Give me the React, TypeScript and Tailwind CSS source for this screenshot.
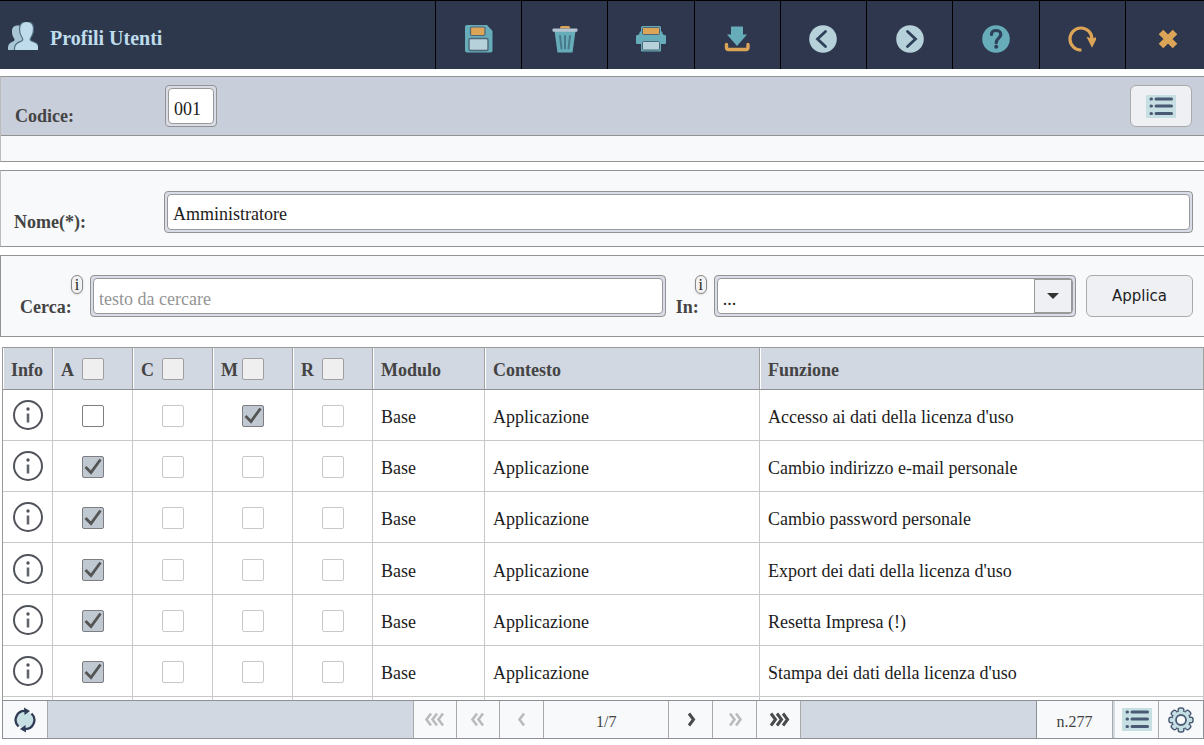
import type { ReactNode } from "react";
import { clsx } from "clsx";

const serif = "font-['Liberation_Serif',serif]";

const teal = "#67adb9";
const orange = "#dca456";
const pale = "#b6d1d9";
const navy = "#2f374e";

function UsersIcon() {
  return (
    <svg width="30" height="28" viewBox="0 0 30 28">
      <path
        d="M0 28V25.500C0.500 21 3 20.500 6 19C7 18 6.500 17 5.500 15.500C4 13 4 11 4 9C4 5 6.500 3.500 10 3.500H15V28z"
        fill="#a8c6d6"
      />
      <path
        d="M6.500 29V26C7 21.500 10 20.500 14 18.800C15.500 18 14.500 16 13.500 14.500C12 12.500 11.500 9.500 11.500 7C11.500 2.500 14 -0.500 18.500 -0.500S25.500 2.500 25.500 7C25.500 9.500 25 12.500 23.500 14.500C22.500 16 21.500 18 23 18.800C27 20.500 30.500 21 31 26V29z"
        fill="#bedcec"
        stroke="#4f6c80"
        strokeWidth="1.200"
      />
    </svg>
  );
}

function SaveIcon() {
  return (
    <svg width="28" height="28" viewBox="0 0 28 28">
      <path d="M2 0h20l5.500 6v19.500a2 2 0 0 1-2 2H2a2 2 0 0 1-2-2V2a2 2 0 0 1 2-2z" fill={teal} />
      <rect x="5.500" y="2" width="14.500" height="8.500" rx="1.500" fill={orange} stroke="#4b6678" strokeWidth="1.200" />
      <rect x="4" y="13.500" width="19" height="12" rx="1.500" fill={pale} stroke="#4b6678" strokeWidth="1.400" />
    </svg>
  );
}

function TrashIcon() {
  return (
    <svg width="26" height="28" viewBox="0 0 26 28">
      <path d="M8 3.500V2.500Q8 1 9.500 1h7Q18 1 18 2.500v1z" fill={orange} />
      <path d="M2.500 6h21L20.500 27.500h-15z" fill={teal} />
      <rect x="0.500" y="3.500" width="25" height="3.200" rx="1" fill="#b4c3d2" />
      <path d="M8 11l1.500 12.500M13 11v12.500M18 11l-1.500 12.500" stroke="#47798a" strokeWidth="2" fill="none" strokeLinecap="round" />
    </svg>
  );
}

function PrintIcon() {
  return (
    <svg width="30" height="26" viewBox="0 0 30 26">
      <rect x="5" y="0" width="20" height="10" rx="1.500" fill={teal} />
      <path d="M4 5.500h22l1 3 3 1v7.500q0 1-1 1H1q-1 0-1-1V9.500l3-1z" fill={teal} />
      <rect x="5" y="14" width="20" height="11.500" rx="1" fill={teal} />
      <rect x="6.500" y="1.500" width="17" height="7" rx="1" fill={orange} stroke="#4b6678" strokeWidth="1" />
      <rect x="6.500" y="15.500" width="17" height="8.500" rx="1" fill={pale} stroke="#4b6678" strokeWidth="1" />
    </svg>
  );
}

function DownloadIcon() {
  return (
    <svg width="26" height="26" viewBox="0 0 26 26">
      <path d="M8.500 0.500h10q.5 0 .5.500v7.500h4L13 20 3 8.500h4V1q0-.5.500-.5z" fill={teal} />
      <path d="M2.500 18.500v3q0 2 2 2h17.500q2 0 2-2v-3" fill="none" stroke={orange} strokeWidth="3.400" strokeLinecap="round" />
    </svg>
  );
}

function ArrowIcon({ right = false }: { right?: boolean }) {
  return (
    <svg width="28" height="28" viewBox="0 0 28 28">
      <circle cx="14" cy="14" r="13.800" fill={pale} />
      <path
        d={right ? "M11.500 6.500l8 7.500-8 7.500" : "M16.500 6.500l-8 7.500 8 7.500"}
        fill="none"
        stroke="#2f405a"
        strokeWidth="2.800"
        strokeLinecap="round"
      />
    </svg>
  );
}

function HelpIcon() {
  return (
    <svg width="28" height="28" viewBox="0 0 28 28">
      <circle cx="14" cy="14" r="13.800" fill={teal} />
      <path
        d="M9.500 9.500C9.500 6.500 11.500 5.500 14 5.500s4.800 1.500 4.800 4c0 3.500-4.600 3.800-4.600 8.200"
        fill="none"
        stroke="#2f405a"
        strokeWidth="3.200"
        strokeLinecap="round"
      />
      <circle cx="14.200" cy="21.800" r="2" fill="#2f405a" />
    </svg>
  );
}

function UndoIcon() {
  return (
    <svg width="28" height="28" viewBox="0 0 28 28">
      <path d="M13.500 25A11 11 0 1 1 24 14" fill="none" stroke={orange} strokeWidth="3.200" />
      <path d="M20 13l4 1.500 4-1.500-4 8z" fill={orange} stroke={orange} strokeWidth="1.500" />
    </svg>
  );
}

function CloseIcon() {
  return (
    <svg width="20" height="20" viewBox="0 0 20 20">
      <path d="M3 3l14 14M17 3L3 17" stroke={orange} strokeWidth="6.500" />
    </svg>
  );
}

function ListIcon() {
  return (
    <svg width="30" height="23" viewBox="0 0 30 23">
      <rect width="30" height="23" fill="#c5dfe3" />
      {[4, 11, 18.500].map((y) => (
        <path key={y} d={`M5 ${y}h.5M10 ${y}h15.500`} stroke="#4a5a74" strokeWidth="3" strokeLinecap="round" />
      ))}
    </svg>
  );
}

function InfoIcon() {
  return (
    <svg width="30" height="30" viewBox="0 0 30 30" className="block">
      <circle cx="15" cy="15" r="14" fill="none" stroke="#50535a" strokeWidth="2" />
      <circle cx="15" cy="9" r="1.700" fill="#50535a" />
      <path d="M15 13.500v9" stroke="#62656b" strokeWidth="2.600" />
    </svg>
  );
}

function RefreshIcon() {
  return (
    <svg width="22" height="26" viewBox="0 0 22 26">
      <circle cx="11" cy="13" r="8.500" fill="#c5dfe3" />
      <path d="M4.500 19.500A9 9 0 0 1 11.500 4M17.500 6.500A9 9 0 0 1 10.500 22" fill="none" stroke="#2f3b55" strokeWidth="2.300" />
      <path d="M10 0.500l6 3.500-5.500 4zM12 25.500l-6-3.500 5.500-4z" fill="#2f3b55" />
    </svg>
  );
}

function GearIcon() {
  const lobes = [0, 45, 90, 135, 180, 225, 270, 315];
  return (
    <svg width="26" height="26" viewBox="-13 -13 26 26">
      {lobes.map((a) => (
        <rect key={a} x="-2.800" y="-12" width="5.600" height="8" rx="2" transform={`rotate(${a})`} fill="#c5dfe3" stroke="#4d5c76" strokeWidth="1.500" />
      ))}
      <circle r="9" fill="#c5dfe3" stroke="#4d5c76" strokeWidth="1" />
      {lobes.map((a) => (
        <rect key={a} x="-2.100" y="-11" width="4.200" height="8" rx="1.500" transform={`rotate(${a})`} fill="#c5dfe3" />
      ))}
      <circle r="5" fill="#f8f9fb" stroke="#4d5c76" strokeWidth="1.800" />
    </svg>
  );
}

function Chevrons({ count, right = false, active = false }: { count: number; right?: boolean; active?: boolean }) {
  const width = count * 6 + 4;
  return (
    <svg width={width} height="16" viewBox={`0 0 ${width} 16`} className={clsx(right && "-scale-x-100")}>
      {Array.from({ length: count }, (_, i) => (
        <path
          key={i}
          d={`M${i * 6 + 7} 1.500l-4.500 6 4.500 6`}
          fill="none"
          stroke={active ? "#4a4a4a" : "#b9bbbd"}
          strokeWidth={active ? 3 : 2.6}
        />
      ))}
    </svg>
  );
}

const tools = [
  { name: "Salva", icon: <SaveIcon /> },
  { name: "Elimina", icon: <TrashIcon /> },
  { name: "Stampa", icon: <PrintIcon /> },
  { name: "Scarica", icon: <DownloadIcon /> },
  { name: "Precedente", icon: <ArrowIcon /> },
  { name: "Successivo", icon: <ArrowIcon right /> },
  { name: "Aiuto", icon: <HelpIcon /> },
  { name: "Annulla", icon: <UndoIcon /> },
  { name: "Chiudi", icon: <CloseIcon /> },
];

const flags = ["A", "C", "M", "R"];

// "on" and "off" can be changed by the user, "-" is locked
const rows = [
  { funzione: "Accesso ai dati della licenza d'uso", state: ["off", "-", "on", "-"] },
  { funzione: "Cambio indirizzo e-mail personale", state: ["on", "-", "-", "-"] },
  { funzione: "Cambio password personale", state: ["on", "-", "-", "-"] },
  { funzione: "Export dei dati della licenza d'uso", state: ["on", "-", "-", "-"] },
  { funzione: "Resetta Impresa (!)", state: ["on", "-", "-", "-"] },
  { funzione: "Stampa dei dati della licenza d'uso", state: ["on", "-", "-", "-"] },
];

function Frame({ className, children }: { className?: string; children: ReactNode }) {
  return (
    <div className={clsx("h-[42px] rounded border border-[#939393] bg-[#d8dce7] p-[2px]", className)}>
      {children}
    </div>
  );
}

const field =
  "block h-full w-full rounded border border-[#999] bg-white px-[5px] pt-[6px] text-lg leading-6 text-[#1c1c1c] outline-none";

function Hint() {
  return (
    <button
      type="button"
      aria-label="Informazioni"
      className="flex h-[19px] w-3 shrink-0 items-center justify-center self-start rounded-md border border-[#888] bg-[#f2f2f2] text-base leading-4 text-[#222] shadow"
    >
      i
    </button>
  );
}

function Check({ label, state }: { label: string; state: string }) {
  return (
    <span className="relative block size-[22px]">
      <input
        type="checkbox"
        aria-label={label}
        defaultChecked={state === "on"}
        disabled={state === "-"}
        className="peer block size-[22px] appearance-none rounded-xs border border-[#7d7d82] bg-white checked:bg-[#c0c9d1] disabled:border-[#c8c8c8]"
      />
      <svg viewBox="0 0 22 22" className="pointer-events-none absolute inset-0 hidden peer-checked:block">
        <path d="M3.500 11l5.500 5.500L18.500 3.500" fill="none" stroke="#555" strokeWidth="2.800" />
      </svg>
    </span>
  );
}

const th = "border-r border-b border-r-[#a0a0a0] border-b-[#8c8f96] p-0 pl-2 text-left shadow-[inset_1px_0_0_#fff]";
const td = "border-r border-b border-[#c8c8c8] p-0 pl-2 pt-1";
const cell = "flex items-center justify-center border-r border-[#aaa] bg-[#f8f9fb]";

export default function App() {
  return (
    <div className={clsx(serif, "bg-white text-lg leading-6 text-[#1c1c1c]")}>
      <header className="flex h-[69px] overflow-hidden border-t border-black" style={{ backgroundColor: navy }}>
        <div className="flex flex-1 items-center gap-3 bg-[#2d384c] pt-[2px] pl-2">
          <UsersIcon />
          <h1 className="pt-1 text-xl font-bold text-[#bedcec]">Profili Utenti</h1>
        </div>
        <nav className="-mr-[7px] grid w-[776px] shrink-0 grid-cols-9">
          {tools.map((tool) => (
            <button key={tool.name} type="button" aria-label={tool.name} className="flex items-center justify-center border-l border-black pt-2">
              {tool.icon}
            </button>
          ))}
        </nav>
      </header>

      <section className="mt-[7px] border-y border-l border-y-[#939393] border-l-[#bbb] bg-[#f8f9fb]">
        <div className="flex h-[59px] items-center border-b border-[#939393] bg-[#c8ceda] pr-3">
          <label htmlFor="codice" className="w-[164px] pt-5 pl-[14px] font-bold text-[#444]">
            Codice:
          </label>
          <Frame className="w-[52px]">
            <input id="codice" defaultValue="001" className={field} />
          </Frame>
          <button
            type="button"
            aria-label="Elenco"
            className="ml-auto flex h-[42px] w-[62px] items-center justify-center rounded-md border border-[#aaa] bg-[#eff0f4]"
          >
            <ListIcon />
          </button>
        </div>
        <div className="h-[25px]"></div>
      </section>

      <section className="mt-2 flex h-[77px] items-center border-y border-l border-y-[#939393] border-l-[#bbb] bg-[#f8f9fb] pt-[6px] pr-[11px]">
        <label htmlFor="nome" className="w-[163px] shrink-0 pt-5 pl-[13px] font-bold text-[#444]">
          Nome(*):
        </label>
        <Frame className="flex-1">
          <input id="nome" defaultValue="Amministratore" className={field} />
        </Frame>
      </section>

      <section className="mt-2 flex h-[82px] border border-r-0 border-[#939393] bg-[#f8f9fb] py-[19px] pr-[11px] pl-[19px]">
        <label htmlFor="cerca" className="w-[51px] pt-5 font-bold text-[#444]">
          Cerca:
        </label>
        <Hint />
        <Frame className="ml-[7px] flex-[8]">
          <input id="cerca" placeholder="testo da cercare" className={clsx(field, "placeholder:text-[#959595]")} />
        </Frame>
        <label htmlFor="in" className="ml-[10px] w-[19px] pt-5 font-bold text-[#444]">
          In:
        </label>
        <Hint />
        <Frame className="relative ml-[7px] flex-[5]">
          <select id="in" className={clsx(field, "appearance-none")}>
            <option>...</option>
          </select>
          <span className="pointer-events-none absolute top-[3px] right-[3px] flex h-[34px] w-[38px] items-center justify-center border border-[#999] bg-[#eff0f4]">
            <svg width="12" height="6" viewBox="0 0 12 6">
              <path d="M0 0h12L6 6z" fill="#333" />
            </svg>
          </span>
        </Frame>
        <button
          type="button"
          className="ml-[10px] w-[107px] rounded-md border border-[#aaa] bg-[#eff0f4] font-['DejaVu_Sans',sans-serif] text-[15px] text-[#222]"
        >
          Applica
        </button>
      </section>

      <main className="mt-[10px] ml-[2px]">
        <table className="h-[353px] w-full table-fixed border-separate border-spacing-0 border-t border-l border-[#999]">
          <colgroup>
            <col className="w-[50px]" />
            <col className="w-20" />
            <col className="w-20" />
            <col className="w-20" />
            <col className="w-20" />
            <col className="w-[112px]" />
            <col className="w-[275px]" />
            <col />
          </colgroup>
          <thead className="bg-[#d2d8e2] text-[#444]">
            <tr className="h-[42px]">
              <th className={clsx(th, "pt-[2px]")}>Info</th>
              {flags.map((flag) => (
                <th key={flag} className={th}>
                  <label className="flex items-center">
                    <span className="w-[21px] pt-[2px]">{flag}</span>
                    <input type="checkbox" className="size-[22px] appearance-none rounded-xs border border-[#a0a0a0] bg-[#efefef] checked:bg-[#c0c9d1]" />
                  </label>
                </th>
              ))}
              <th className={clsx(th, "pt-[2px]")}>Modulo</th>
              <th className={clsx(th, "pt-[2px]")}>Contesto</th>
              <th className={clsx(th, "pt-[2px]")}>Funzione</th>
            </tr>
          </thead>
          <tbody>
            {rows.map((row) => (
              <tr key={row.funzione} className="h-[51px]">
                <td className="border-r border-b border-[#c8c8c8] p-0">
                  <button type="button" aria-label="Info" className="ml-[10px] block">
                    <InfoIcon />
                  </button>
                </td>
                {flags.map((flag, i) => (
                  <td key={flag} className="border-r border-b border-[#c8c8c8] p-0 pt-[2px] pl-[29px]">
                    <Check label={`${flag} ${row.funzione}`} state={row.state[i]} />
                  </td>
                ))}
                <td className={td}>Base</td>
                <td className={td}>Applicazione</td>
                <td className={td}>{row.funzione}</td>
              </tr>
            ))}
            {/* top edge of the next row, cut by the footer */}
            <tr aria-hidden="true" className="h-[3px]">
              {Array.from({ length: 8 }, (_, i) => (
                <td key={i} className="border-r border-[#c8c8c8] p-0"></td>
              ))}
            </tr>
          </tbody>
        </table>

        <footer className="flex h-[39px] border border-[#8c8f96] bg-[#d2d8e2] text-base text-[#444]">
          <button type="button" aria-label="Aggiorna" className={clsx(cell, "w-[45px]")}>
            <RefreshIcon />
          </button>
          <div className="flex-[14] border-r border-[#aaa]"></div>
          <button type="button" aria-label="Prima pagina" className={clsx(cell, "w-[43px]")}>
            <Chevrons count={3} />
          </button>
          <button type="button" aria-label="Indietro veloce" className={clsx(cell, "w-[43px]")}>
            <Chevrons count={2} />
          </button>
          <button type="button" aria-label="Pagina precedente" className={clsx(cell, "w-11")}>
            <Chevrons count={1} />
          </button>
          <div className={clsx(cell, "w-[125px] pt-1")}>1/7</div>
          <button type="button" aria-label="Pagina successiva" className={clsx(cell, "w-11")}>
            <Chevrons count={1} right active />
          </button>
          <button type="button" aria-label="Avanti veloce" className={clsx(cell, "w-11")}>
            <Chevrons count={2} right />
          </button>
          <button type="button" aria-label="Ultima pagina" className={clsx(cell, "w-11")}>
            <Chevrons count={3} right active />
          </button>
          <div className="flex-[9] border-r border-[#8c8f96]"></div>
          <div className={clsx(cell, "w-[76px] pt-1")}>n.277</div>
          <button type="button" aria-label="Elenco" className={clsx(cell, "ml-[2px] w-11")}>
            <ListIcon />
          </button>
          <button type="button" aria-label="Impostazioni" className="flex w-11 items-center justify-center bg-[#f8f9fb]">
            <GearIcon />
          </button>
        </footer>
      </main>
    </div>
  );
}
